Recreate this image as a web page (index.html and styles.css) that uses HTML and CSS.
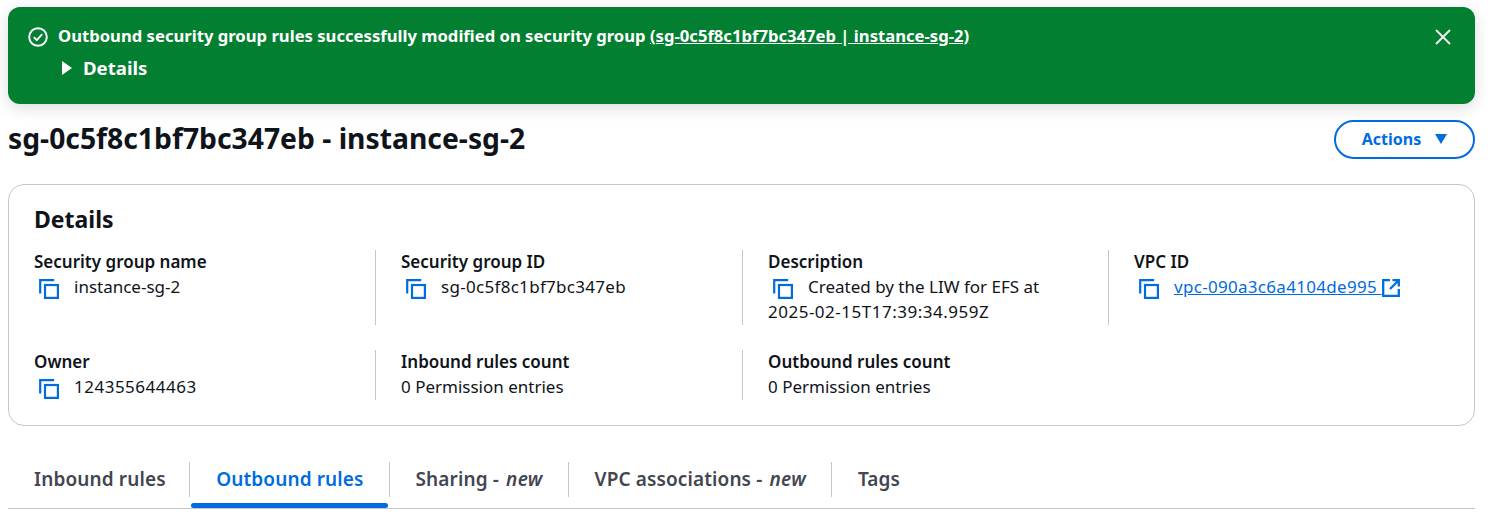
FILE: index.html
```html
<!DOCTYPE html>
<html>
  <head>
    <title>Security group</title>
    <link rel="stylesheet" href="styles.css">
  </head>
  <body>
    <svg class="icon-defs" width="0" height="0">
      <symbol id="copy" viewBox="0 0 20 20">
        <path d="M1.2 14.5V1.2h14" fill="none" stroke="currentColor" stroke-width="2.2"/>
        <rect x="6" y="6" width="12.9" height="12.9" fill="none" stroke="currentColor" stroke-width="2.2"/>
      </symbol>
    </svg>

    <div class="flash">
      <svg class="flash-check" viewBox="0 0 20 20">
        <circle cx="10" cy="10" r="8.8" fill="none" stroke="currentColor" stroke-width="1.9"/>
        <path d="M5.8 10.2l3 3 5.4-6" fill="none" stroke="currentColor" stroke-width="1.9"/>
      </svg>
      <div class="flash-body">
        <div class="flash-title">Outbound security group rules successfully modified on security group <a href="#">(sg-0c5f8c1bf7bc347eb | instance-sg-2)</a></div>
        <div class="flash-details"><span class="caret-right"></span>Details</div>
      </div>
      <svg class="flash-close" viewBox="0 0 16 16">
        <path d="M1 1l14 14M15 1L1 15" fill="none" stroke="currentColor" stroke-width="2"/>
      </svg>
    </div>

    <div class="page-header">
      <h1>sg-0c5f8c1bf7bc347eb - instance-sg-2</h1>
      <button class="actions-btn">Actions<span class="caret-down"></span></button>
    </div>

    <div class="card">
      <h2>Details</h2>
      <div class="details-grid">
        <div class="cell">
          <div class="label">Security group name</div>
          <div class="value"><svg class="copy-icon"><use href="#copy"/></svg>instance-sg-2</div>
        </div>
        <div class="cell">
          <div class="label">Security group ID</div>
          <div class="value"><svg class="copy-icon"><use href="#copy"/></svg><span class="id-text">sg-0c5f8c1bf7bc347eb</span></div>
        </div>
        <div class="cell">
          <div class="label">Description</div>
          <div class="value"><svg class="copy-icon"><use href="#copy"/></svg>Created by the LIW for EFS at<br><span class="digits">2025-02-15T17:39:34.959Z</span></div>
        </div>
        <div class="cell">
          <div class="label">VPC ID</div>
          <div class="value"><svg class="copy-icon"><use href="#copy"/></svg><a href="#" class="id-text">vpc-090a3c6a4104de995 </a><svg class="ext-icon" viewBox="0 0 18 18">
            <path d="M8 1.2H1.2v15.6h15.6V10M10.5 1.2h6.3v6.3M16.5 1.5L8 10" fill="none" stroke="currentColor" stroke-width="2.3"/>
          </svg></div>
        </div>
        <div class="cell">
          <div class="label">Owner</div>
          <div class="value"><svg class="copy-icon"><use href="#copy"/></svg><span class="digits">124355644463</span></div>
        </div>
        <div class="cell">
          <div class="label">Inbound rules count</div>
          <div class="value">0 Permission entries</div>
        </div>
        <div class="cell">
          <div class="label">Outbound rules count</div>
          <div class="value">0 Permission entries</div>
        </div>
      </div>
    </div>

    <div class="tabs">
      <div class="tab">Inbound rules</div>
      <div class="tab active">Outbound rules</div>
      <div class="tab">Sharing - <em>new</em></div>
      <div class="tab">VPC associations - <em>new</em></div>
      <div class="tab">Tags</div>
    </div>
  </body>
</html>
```

FILE: styles.css
```css
body {
  font-family: "Noto Sans", "Open Sans", sans-serif;
  font-size: 17px;
  line-height: 25px;
  color: #0f141a;
  margin: 0;
  padding: 7px 18px 0 8px;
  background-color: #ffffff;
  overflow: hidden;
}

a {
  color: inherit;
}

.icon-defs {
  position: absolute;
}

.flash {
  display: flex;
  align-items: flex-start;
  height: 97px;
  box-sizing: border-box;
  padding: 14px 24px 0 20px;
  background-color: #037f31;
  color: #ffffff;
  border-radius: 12px;
  box-shadow: 0 4px 16px rgba(0, 0, 0, 0.14);
  font-weight: 700;
}

.flash-check {
  width: 20px;
  height: 20px;
  margin: 6px 10px 0 0;
  flex: none;
}

.flash-body {
  flex: 1;
}

.flash-title {
  font-size: 16.65px;
  line-height: 30px;
}

.flash-details {
  display: flex;
  align-items: center;
  line-height: 33px;
  font-size: 18.6px;
}

.caret-right {
  width: 0;
  height: 0;
  margin: 0 11px 0 4px;
  border-left: 10px solid #ffffff;
  border-top: 7px solid transparent;
  border-bottom: 7px solid transparent;
}

.flash-close {
  width: 16px;
  height: 16px;
  margin-top: 8px;
  color: #eeeeee;
}

.page-header {
  display: flex;
  justify-content: space-between;
  align-items: center;
  margin-top: 16px;
  height: 39px;
}

h1 {
  margin: 0 0 3px;
  font-size: 28.3px;
  font-weight: 700;
  line-height: 36px;
}

.actions-btn {
  display: flex;
  align-items: center;
  justify-content: center;
  width: 141px;
  height: 39px;
  background-color: #ffffff;
  border: 2px solid #006ce0;
  border-radius: 20px;
  color: #006ce0;
  font-family: inherit;
  font-size: 16px;
  font-weight: 700;
  padding: 0 0 2px;
}

.caret-down {
  width: 0;
  height: 0;
  margin-left: 14px;
  border-top: 10px solid #006ce0;
  border-left: 6.5px solid transparent;
  border-right: 6.5px solid transparent;
}

.card {
  margin-top: 25px;
  height: 242px;
  box-sizing: border-box;
  padding: 18px 25px 0;
  border: 1px solid #c6c6cd;
  border-radius: 16px;
}

h2 {
  margin: 0;
  font-size: 23px;
  font-weight: 700;
  line-height: 32px;
}

.details-grid {
  display: grid;
  grid-template-columns: 341px 367px 366px 1fr;
  grid-template-rows: 75px 50px;
  row-gap: 25px;
  margin-top: 15px;
}

.cell {
  padding-left: 25px;
  border-left: 1px solid #c6c6cd;
}

.cell:first-child,
.cell:nth-child(5) {
  padding-left: 0;
  border-left: none;
}

.label {
  margin-top: -1px;
  font-weight: 600;
}

.copy-icon {
  width: 20px;
  height: 20px;
  margin: 0 15px 0 5px;
  color: #006ce0;
  vertical-align: -6px;
}

.id-text {
  letter-spacing: 0.3px;
}

.digits {
  letter-spacing: 0.5px;
}

.value a {
  color: #006ce0;
}

.ext-icon {
  width: 18px;
  height: 18px;
  color: #006ce0;
  vertical-align: -4px;
}

.tabs {
  display: flex;
  margin-top: 36px;
  height: 47px;
  box-sizing: border-box;
  border-bottom: 1px solid #c6c6cd;
  font-size: 19px;
  font-weight: 600;
  letter-spacing: 0.12px;
  color: #424650;
}

.tab {
  position: relative;
  height: 35px;
  line-height: 35px;
  padding: 0 25px 0 26px;
  border-left: 1px solid #c6c6cd;
}

.tab:first-child {
  padding-right: 23.5px;
  border-left: none;
}

.tab em {
  margin-left: 2px;
  letter-spacing: 0.3px;
}

.tab.active {
  color: #006ce0;
}

.tab.active::after {
  content: "";
  position: absolute;
  left: 1px;
  right: 1px;
  top: 41px;
  height: 5px;
  border-radius: 3px;
  background-color: #006ce0;
}
```
